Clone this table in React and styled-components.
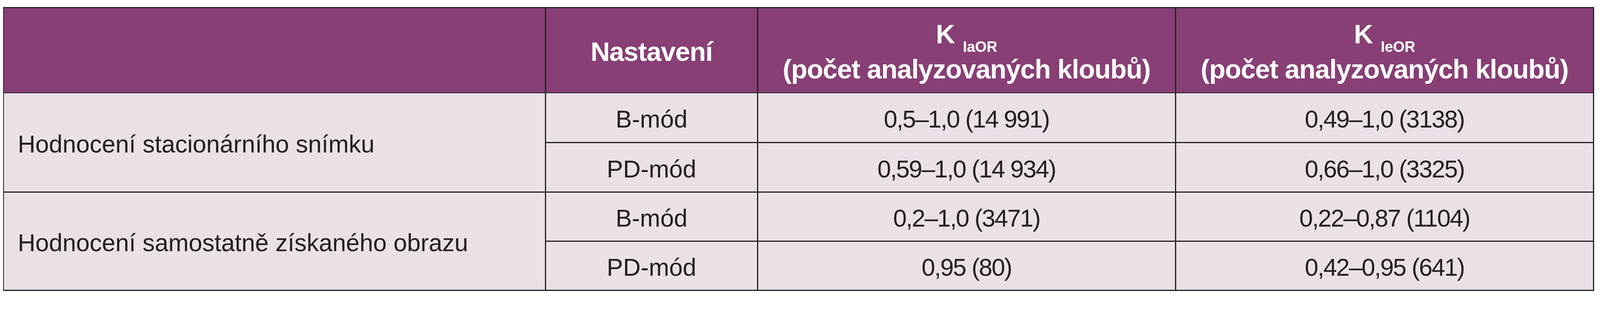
import React from "react";
import styled, { createGlobalStyle } from "styled-components";

// sizes are taken from a 4327px wide page; scale them to the viewport width
const u = (px) => `${((px / 4327) * 100).toFixed(4)}vw`;

const GlobalStyle = createGlobalStyle`
	body {
		margin: 0;
		background: #fff;
	}
`;

const Page = styled.div`
	padding: ${u(19)} 0 0 ${u(8)};
`;

/* dark background + gaps draw the rules between cells */
const Table = styled.div`
	display: grid;
	width: ${u(4303)};
	box-sizing: border-box;
	grid-template-columns: ${u(1463)} ${u(570)} ${u(1128)} ${u(1127)};
	grid-template-rows: ${u(228)} ${u(132)} ${u(131)} ${u(130)} ${u(130)};
	gap: ${u(3)};
	padding: ${u(3)};
	background-color: #231f20;
	font-family: "Liberation Sans", Arial, sans-serif;
`;

const HeadCell = styled.div`
	background-color: #873f75;
	color: #fff;
	font-size: ${u(72)};
	font-weight: 700;
	letter-spacing: ${u(-1.2)};
	line-height: ${u(95)};
	display: flex;
	flex-direction: column;
	align-items: center;
	justify-content: center;
	text-align: center;
	padding-top: ${u(8)};
	white-space: nowrap;
`;

const Sub = styled.span`
	font-size: ${u(40)};
	line-height: 0;
	vertical-align: ${u(-24)};
	margin-left: ${u(22)};
	letter-spacing: 0;
`;

const Cell = styled.div`
	background-color: #e9e0e8;
	color: #231f20;
	font-size: ${u(66)};
	font-weight: 400;
	line-height: 1;
	letter-spacing: ${(p) => (p.$num ? u(-2.3) : "0")};
	display: flex;
	align-items: center;
	justify-content: ${(p) => (p.$left ? "flex-start" : "center")};
	padding: ${(p) => (p.$left ? `${u(8)} 0 0 ${u(37)}` : `${u(8)} 0 0`)};
	grid-row: ${(p) => (p.$span ? `span ${p.$span}` : "auto")};
	white-space: nowrap;
`;

const groups = [
	{
		label: "Hodnocení stacionárního snímku",
		rows: [
			["B-mód", "0,5–1,0 (14 991)", "0,49–1,0 (3138)"],
			["PD-mód", "0,59–1,0 (14 934)", "0,66–1,0 (3325)"],
		],
	},
	{
		label: "Hodnocení samostatně získaného obrazu",
		rows: [
			["B-mód", "0,2–1,0 (3471)", "0,22–0,87 (1104)"],
			["PD-mód", "0,95 (80)", "0,42–0,95 (641)"],
		],
	},
];

function App() {
	return (
		<Page>
			<GlobalStyle />
			<Table>
				<HeadCell />
				<HeadCell>Nastavení</HeadCell>
				<HeadCell>
					<div>
						K<Sub>IaOR</Sub>
					</div>
					<div>(počet analyzovaných kloubů)</div>
				</HeadCell>
				<HeadCell>
					<div>
						K<Sub>IeOR</Sub>
					</div>
					<div>(počet analyzovaných kloubů)</div>
				</HeadCell>
				{groups.map((g) =>
					g.rows.map((r, i) => (
						<React.Fragment key={g.label + i}>
							{i === 0 && (
								<Cell $left $span={g.rows.length}>
									{g.label}
								</Cell>
							)}
							<Cell>{r[0]}</Cell>
							<Cell $num>{r[1]}</Cell>
							<Cell $num>{r[2]}</Cell>
						</React.Fragment>
					))
				)}
			</Table>
		</Page>
	);
}

export default App;
